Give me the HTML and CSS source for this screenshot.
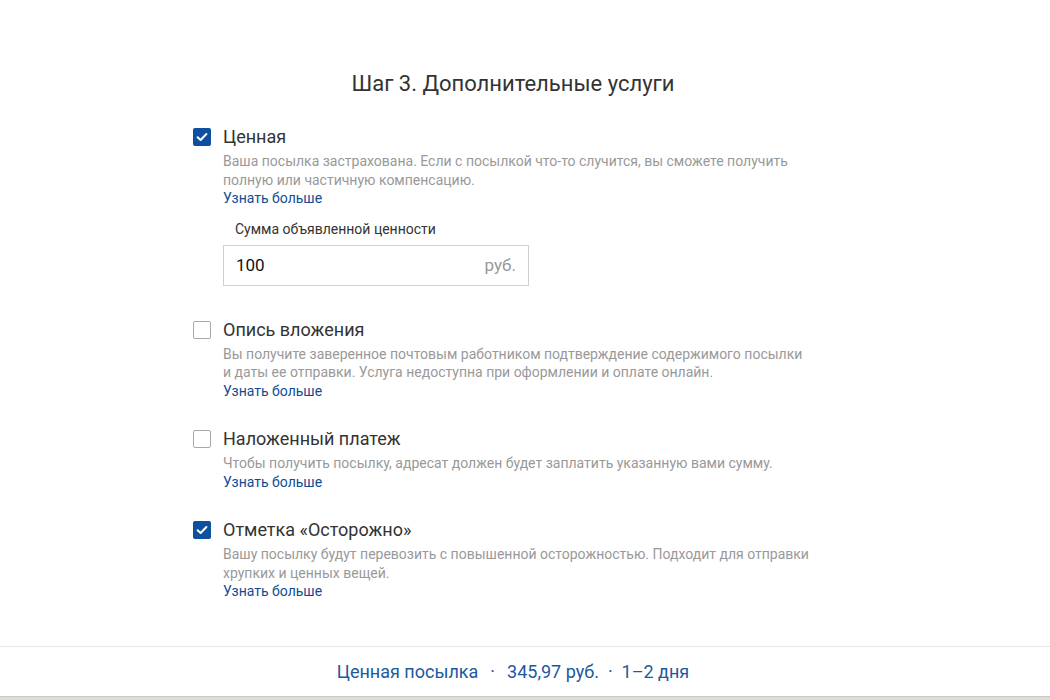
FILE: index.html
```html
<!DOCTYPE html>
<html lang="ru">
<head>
<meta charset="utf-8">
<link rel="stylesheet" href="styles.css">
</head>
<body>
<div class="page">
  <main class="step">
    <h1 class="title">Шаг 3. Дополнительные услуги</h1>

    <div class="option">
      <span class="check checked"><svg viewBox="0 0 18 18" width="18" height="18"><path d="M4.6 9.2 L7.6 12 L13.4 6" fill="none" stroke="#fff" stroke-width="2" stroke-linecap="round" stroke-linejoin="round"/></svg></span>
      <div class="body">
        <div class="label">Ценная</div>
        <p class="desc">Ваша посылка застрахована. Если с посылкой что-то случится, вы сможете получить полную или частичную компенсацию.</p>
        <a class="more" href="#">Узнать больше</a>
        <div class="field">
          <div class="field-label">Сумма объявленной ценности</div>
          <div class="input"><span class="value">100</span><span class="unit">руб.</span></div>
        </div>
      </div>
    </div>

    <div class="option">
      <span class="check"></span>
      <div class="body">
        <div class="label">Опись вложения</div>
        <p class="desc">Вы получите заверенное почтовым работником подтверждение содержимого посылки и даты ее отправки. Услуга недоступна при оформлении и оплате онлайн.</p>
        <a class="more" href="#">Узнать больше</a>
      </div>
    </div>

    <div class="option">
      <span class="check"></span>
      <div class="body">
        <div class="label">Наложенный платеж</div>
        <p class="desc">Чтобы получить посылку, адресат должен будет заплатить указанную вами сумму.</p>
        <a class="more" href="#">Узнать больше</a>
      </div>
    </div>

    <div class="option">
      <span class="check checked"><svg viewBox="0 0 18 18" width="18" height="18"><path d="M4.6 9.2 L7.6 12 L13.4 6" fill="none" stroke="#fff" stroke-width="2" stroke-linecap="round" stroke-linejoin="round"/></svg></span>
      <div class="body">
        <div class="label">Отметка «Осторожно»</div>
        <p class="desc">Вашу посылку будут перевозить с повышенной осторожностью. Подходит для отправки хрупких и ценных вещей.</p>
        <a class="more" href="#">Узнать больше</a>
      </div>
    </div>
  </main>

  <footer class="summary">
    <span>Ценная посылка</span><span class="dot">·</span><span>345,97 руб.</span><span class="dot dot-narrow">·</span><span>1–2 дня</span>
  </footer>
  <div class="bottom-band"></div>
</div>
</body>
</html>
```

FILE: styles.css
```css
* { box-sizing: border-box; }
html, body { margin: 0; padding: 0; background: #fff; }
body {
  font-family: Roboto, "Liberation Sans", Arial, sans-serif;
  color: #333;
  width: 1050px;
  height: 700px;
  overflow: hidden;
}
.page {
  display: flex;
  flex-direction: column;
  height: 700px;
}
.step {
  width: 640px;
  margin-left: 193px;
  padding-top: 70px;
  flex: 1;
}
.title {
  margin: 0 0 27px;
  font-size: 22px;
  line-height: 28px;
  font-weight: 400;
  text-align: center;
  color: #333;
}
.option {
  display: flex;
  gap: 12px;
  margin-bottom: 27px;
}
.check {
  flex: none;
  width: 18px;
  height: 18px;
  margin-top: 3px;
  border: 1px solid #a9a9a9;
  border-radius: 2px;
  background: #fff;
  display: block;
}
.check.checked {
  border: none;
  background: #0d519e;
}
.check svg { display: block; }
.body {
  flex: none;
  width: 588px;
}
.label {
  font-size: 18px;
  line-height: 24px;
  color: #333;
  margin-bottom: 3px;
}
.desc {
  margin: 0;
  font-size: 14px;
  line-height: 18.5px;
  color: #999;
}
.more {
  display: block;
  font-size: 14px;
  line-height: 18.5px;
  color: #0f4c93;
  text-decoration: none;
}
.field {
  margin-top: 12px;
  margin-bottom: 5px;
}
.field-label {
  font-size: 14px;
  line-height: 18px;
  color: #333;
  padding-left: 12px;
  margin-bottom: 7px;
}
.input {
  width: 306px;
  height: 41px;
  border: 1px solid #cfcfcf;
  display: flex;
  align-items: center;
  justify-content: space-between;
  padding: 0 12px;
  font-size: 17px;
}
.input .value { color: #111; }
.input .unit { color: #999; }
.summary {
  height: 50px;
  border-top: 1px solid #e6e6e6;
  display: flex;
  justify-content: center;
  align-items: center;
  padding-right: 24px;
  font-size: 18px;
  color: #1a5a9e;
}
.summary .dot {
  margin: 0 12px;
}
.summary .dot-narrow {
  margin: 0 9px;
}
.bottom-band {
  height: 4px;
  border-top: 1px solid #c9c8c0;
  background: #dedcd6;
}
```
